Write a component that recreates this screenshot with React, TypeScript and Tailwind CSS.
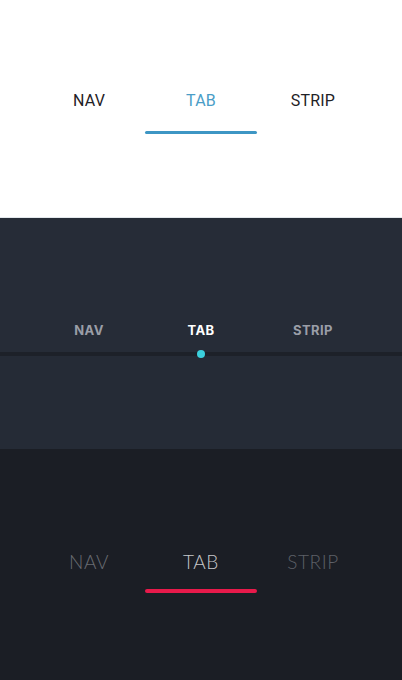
import React from "react";

const tabs = ["NAV", "TAB", "STRIP"];

export default function App() {
  return (
    <div className="w-[402px] h-[680px] flex flex-col overflow-hidden">
      {/* Light section */}
      <section className="h-[218px] bg-white border-b border-[#e3e8ec] pt-[89px]">
        <div className="mx-auto w-[336px] grid grid-cols-3" style={{ fontFamily: "Roboto, 'Liberation Sans', sans-serif" }}>
          {tabs.map((t, i) => (
            <div key={t} className="flex flex-col items-center">
              <span className={`text-[16px] leading-[24px] tracking-[0.2px] ${i === 1 ? "text-[#4a9dc7]" : "text-[#1f2226]"}`}>{t}</span>
              <div className={`mt-[18px] h-[3px] w-full rounded-full ${i === 1 ? "bg-[#3d96c4]" : "bg-transparent"}`} />
            </div>
          ))}
        </div>
      </section>

      {/* Mid-dark section */}
      <section className="h-[231px] bg-[#262c37] pt-[102px] flex flex-col">
        <div className="mx-auto w-[336px] grid grid-cols-3" style={{ fontFamily: "Inter, 'Liberation Sans', sans-serif" }}>
          {tabs.map((t, i) => (
            <div key={t} className="flex justify-center">
              <span className={`text-[13px] leading-[20px] font-bold tracking-[0.4px] ${i === 1 ? "text-white" : "text-[#9a9ea7]"}`}>{t}</span>
            </div>
          ))}
        </div>
        <div className="relative mt-[12px] h-1 w-full bg-[#1d2129]">
          <div className="absolute left-[197px] top-[-2px] w-2 h-2 rounded-full bg-[#3bd0dd]" />
        </div>
        <div className="flex-1 bg-[#252b36]" />
      </section>

      {/* Darkest section */}
      <section className="h-[231px] bg-[#1b1e25] pt-[99px]">
        <div className="mx-auto w-[336px] grid grid-cols-3" style={{ fontFamily: "Lato, 'Liberation Sans', sans-serif" }}>
          {tabs.map((t, i) => (
            <div key={t} className="flex flex-col items-center">
              <span
                className={`text-[19px] leading-[28px] font-light tracking-[0.6px] ${
                  i === 0 ? "text-[#696c72]" : i === 1 ? "text-[#c6c7ca]" : "text-[#5d6067]"
                }`}
              >
                {t}
              </span>
              <div className={`mt-[13px] h-1 w-full rounded-full ${i === 1 ? "bg-[#e81a4b]" : "bg-transparent"}`} />
            </div>
          ))}
        </div>
      </section>
    </div>
  );
}
